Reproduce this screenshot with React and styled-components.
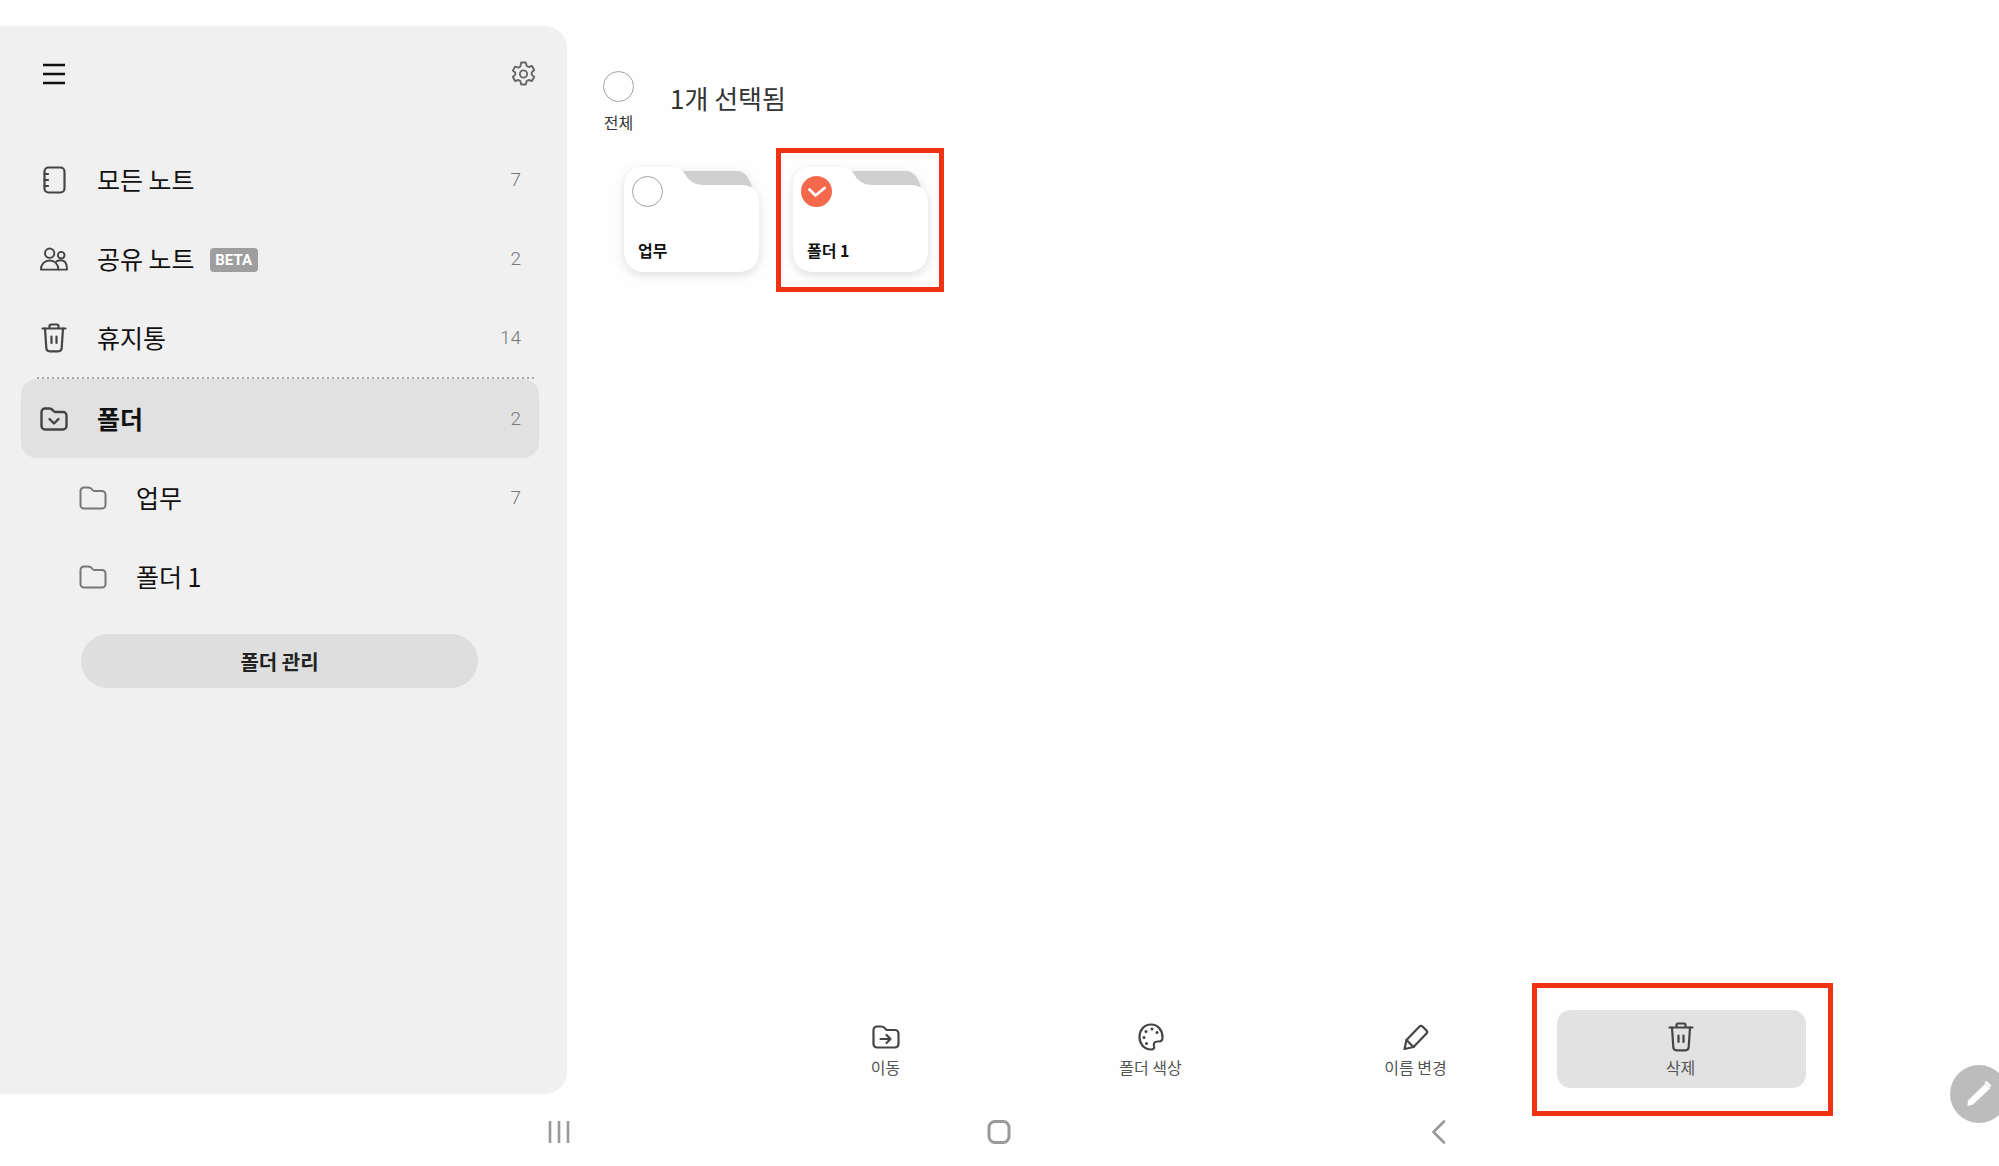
import styled, { createGlobalStyle } from "styled-components";

const GlobalStyle = createGlobalStyle`
  html, body {
    margin: 0;
    padding: 0;
    background: #fefefe;
  }
  * {
    box-sizing: border-box;
  }
`;

const Line = ({ w, h, sw = 2.2, color = "#444", children }) => (
  <svg width={w} height={h} viewBox={`0 0 ${w} ${h}`} fill="none" stroke={color} strokeWidth={sw} strokeLinecap="round" strokeLinejoin="round">
    {children}
  </svg>
);

const MenuIcon = () => (
  <Line w={24} h={22} sw={2.6} color="#111">
    <path d="M1 2h22M1 11h22M1 20h22" strokeLinecap="butt" />
  </Line>
);

const GearIcon = () => (
  <Line w={25} h={26} sw={1.9} color="#666">
    <path d="M10.2 1.5h4.6l.8 3.4 2 1.1 3.3-1 2.3 4-2.5 2.4v2.2l2.5 2.4-2.3 4-3.3-1-2 1.1-.8 3.4h-4.6l-.8-3.4-2-1.1-3.3 1-2.3-4 2.5-2.4v-2.2L1.8 9.6l2.3-4 3.3 1 2-1.1z" />
    <circle cx="12.5" cy="13" r="3.6" />
  </Line>
);

const NoteIcon = () => (
  <Line w={24} h={28}>
    <rect x="2.5" y="1.5" width="20" height="25" rx="4" />
    <path d="M2.5 8h3.5M2.5 14h3.5M2.5 20h3.5" />
  </Line>
);

const UsersIcon = () => (
  <Line w={29} h={24} sw={2}>
    <circle cx="10" cy="6" r="4.8" />
    <circle cx="22" cy="8" r="3.4" />
    <path d="M1 23c0-6 4-9.5 9-9.5s9 3.5 9 9.5z" />
    <path d="M17 14.5c1.300-.7 3-1.200 4.500-1.200 4 0 6.500 3.700 6.500 9.700h-9" />
  </Line>
);

const TrashIcon = () => (
  <Line w={26} h={30}>
    <path d="M8.500 5.500V3a1.500 1.500 0 0 1 1.500-1.500h6A1.500 1.500 0 0 1 17.500 3v2.500M1.500 5.500h23" />
    <path d="M4 5.500 5.300 25a3.500 3.500 0 0 0 3.500 3.300h8.400a3.500 3.500 0 0 0 3.500-3.300L22 5.500" />
    <path d="M10.500 13.500v6.500M15.500 13.500v6.500" />
  </Line>
);

const folderPath =
  "M1.500 5a3.500 3.500 0 0 1 3.500-3.500h4.500c2 0 3 1 4 2.500.6.800 1.100 1 2 1h7.500a3.500 3.500 0 0 1 3.500 3.500v10.500a3.500 3.500 0 0 1-3.500 3.500H5a3.500 3.500 0 0 1-3.500-3.500z";

const FolderIcon = ({ color = "#777", sw = 2, children }) => (
  <Line w={28} h={24} sw={sw} color={color}>
    <path d={folderPath} />
    {children}
  </Line>
);

const PaletteIcon = () => (
  <svg width="26" height="28" viewBox="0 0 26 28" fill="none" stroke="#444" strokeWidth="2.2" strokeLinejoin="round">
    <path d="M13 1.500C6 1.500 1.500 7.300 1.500 14S6 26.500 13 26.500c2.700 0 3.700-1.500 3-3.500-.8-2.500.5-4.500 3.500-4.500h1.500c2.300 0 3.500-1.500 3.500-4C24.500 7.300 20 1.500 13 1.500z" />
    <g fill="#444" stroke="none">
      <circle cx="8" cy="8.500" r="1.500" />
      <circle cx="14" cy="6" r="1.500" />
      <circle cx="19" cy="9.500" r="1.500" />
      <circle cx="6" cy="14.500" r="1.500" />
      <circle cx="8.500" cy="20.500" r="1.500" />
    </g>
  </svg>
);

const PencilIcon = () => (
  <Line w={27} h={27}>
    <path d="M2.500 25 4.500 16 17.500 2.500c1-1 2-1 3 0l4 4c1 1 1 2 0 3L11.500 23z" />
    <path d="M4.500 16l7 7" />
  </Line>
);

const Page = styled.div`
  position: relative;
  width: 1999px;
  height: 1166px;
  overflow: hidden;
  display: flex;
  flex-direction: column;
  background: #fefefe;
  font-family: "Noto Sans CJK KR", "Noto Sans", sans-serif;
  color: #111;
`;

const Content = styled.div`
  display: flex;
  height: 1094px;
`;

const Sidebar = styled.aside`
  width: 567px;
  margin-top: 26px;
  background: #f0f0f0;
  border-radius: 0 22px 22px 0;
  flex-shrink: 0;
`;

const SideHeader = styled.div`
  height: 96px;
  margin-bottom: 18px;
  padding: 0 31px 0 42px;
  display: flex;
  align-items: center;
  justify-content: space-between;
`;

const Row = styled.div`
  height: 79px;
  margin: 0 28px 0 21px;
  padding: 0 18px 0 ${(p) => (p.$sub ? 58 : 19)}px;
  display: flex;
  align-items: center;
  background: ${(p) => (p.$active ? "#e1e1e1" : "transparent")};
  border-radius: 16px;
`;

const RowIcon = styled.span`
  width: 28px;
  display: flex;
  justify-content: center;
  flex-shrink: 0;
`;

const RowLabel = styled.span`
  margin-left: 29px;
  font-size: 25px;
  line-height: 1;
  font-weight: ${(p) => (p.$active ? 700 : 400)};
  color: #111;
`;

const Beta = styled.span`
  margin: 3px 0 0 15px;
  width: 48px;
  height: 24px;
  border-radius: 4px;
  background: #9e9e9e;
  color: #fff;
  font-family: "Roboto", sans-serif;
  font-size: 15px;
  font-weight: 700;
  display: flex;
  align-items: center;
  justify-content: center;
`;

const Count = styled.span`
  margin-left: auto;
  font-family: "Roboto", sans-serif;
  font-size: 19px;
  font-weight: 300;
  color: #777;
`;

const Divider = styled.div`
  height: 2px;
  margin: 0 31px 0 37px;
  background-image: linear-gradient(to right, #a8a8a8 2px, transparent 2px);
  background-size: 5px 2px;
`;

const ManageButton = styled.div`
  height: 54px;
  margin: 18px 89px 0 81px;
  border-radius: 27px;
  background: #dedede;
  display: flex;
  align-items: center;
  justify-content: center;
  font-size: 20px;
  font-weight: 700;
  color: #222;
`;

const Main = styled.main`
  flex: 1;
  padding: 71px 0 6px 36px;
  display: flex;
  flex-direction: column;
`;

const SelectBar = styled.div`
  display: flex;
  align-items: flex-start;
`;

const SelectAll = styled.div`
  width: 31px;
  display: flex;
  flex-direction: column;
  align-items: center;
`;

const SelectAllLabel = styled.span`
  margin-top: 8px;
  font-size: 16px;
  line-height: 24px;
  white-space: nowrap;
  color: #333;
`;

const Circle = styled.span`
  width: 31px;
  height: 31px;
  border-radius: 50%;
  flex-shrink: 0;
  display: flex;
  align-items: center;
  justify-content: center;
  border: ${(p) => (p.$checked ? "none" : "1.5px solid #a2a2a2")};
  background: ${(p) => (p.$checked ? "#f4694c" : "transparent")};
`;

const Title = styled.h1`
  margin: 8px 0 0 36px;
  font-size: 26px;
  line-height: 38px;
  font-weight: 400;
  color: #333;
`;

const FolderGrid = styled.div`
  display: flex;
  gap: 34px;
  margin: 33px 0 0 21px;
`;

const Highlight = styled.span`
  position: absolute;
  top: ${(p) => p.$t}px;
  right: ${(p) => p.$r}px;
  bottom: ${(p) => p.$b}px;
  left: ${(p) => p.$l}px;
  border: 5px solid #ef3312;
  pointer-events: none;
`;

const FolderCard = styled.div`
  position: relative;
  width: 135px;
  height: 105px;
  padding: 9px 0 0 8px;
  display: flex;
  flex-direction: column;

  > svg {
    position: absolute;
    inset: 0;
    filter: drop-shadow(0 3px 5px rgba(0, 0, 0, 0.13));
  }
`;

const FolderSelect = styled.div`
  position: relative;
`;

const FolderName = styled.span`
  position: relative;
  margin: 31px 0 0 6px;
  font-size: 16px;
  line-height: 24px;
  font-weight: 700;
  color: #111;
`;

const Toolbar = styled.div`
  margin-top: auto;
  padding-right: 193px;
  display: flex;
  justify-content: flex-end;
  gap: 16px;
`;

const ToolItem = styled.div`
  position: relative;
  width: 249px;
  height: 78px;
  padding: 12px 2px 0 0;
  border-radius: 14px;
  background: ${(p) => (p.$active ? "#e2e2e2" : "transparent")};
  display: flex;
  flex-direction: column;
  align-items: center;
`;

const ToolIcon = styled.span`
  height: 30px;
  display: flex;
  align-items: center;
  justify-content: center;
`;

const ToolLabel = styled.span`
  margin-top: 3px;
  font-size: 16px;
  line-height: 24px;
  color: #555;
`;

const NavBar = styled.nav`
  height: 72px;
  display: flex;
  justify-content: center;
  align-items: flex-start;
  padding: 26px 2px 0 0;
`;

const NavSlot = styled.div`
  width: 440px;
  height: 24px;
  display: flex;
  align-items: center;
  justify-content: center;
`;

const Fab = styled.div`
  position: absolute;
  left: 1950px;
  top: 1065px;
  width: 58px;
  height: 58px;
  border-radius: 50%;
  background: #bcbcbc;
  display: flex;
  align-items: center;
  justify-content: center;
`;

const sideRows = [
  { label: "모든 노트", count: 7, icon: <NoteIcon /> },
  { label: "공유 노트", count: 2, icon: <UsersIcon />, beta: true },
  { label: "휴지통", count: 14, icon: <TrashIcon /> },
];

const tools = [
  {
    label: "이동",
    icon: (
      <FolderIcon color="#444" sw={2.2}>
        <path d="M8.500 14h10M14.500 10l4 4-4 4" />
      </FolderIcon>
    ),
  },
  { label: "폴더 색상", icon: <PaletteIcon /> },
  { label: "이름 변경", icon: <PencilIcon /> },
  { label: "삭제", icon: <TrashIcon />, active: true },
];

const Folder = ({ name, checked }) => (
  <FolderCard>
    <svg width="135" height="105" viewBox="0 0 135 105">
      <path d="M59 4H113Q123 4 128 20H72Q66 20 59 4Z" fill="#cfcfcf" />
      <path
        d="M20 0H50Q56 0 60 6 67 18 78 18H117Q135 18 135 36V83Q135 105 113 105H22Q0 105 0 83V20Q0 0 20 0Z"
        fill="#fff"
      />
    </svg>
    <FolderSelect>
      <Circle $checked={checked}>
        {checked && (
          <svg width="18" height="12" viewBox="0 0 18 12" fill="none" stroke="#fff" strokeWidth="2.800" strokeLinecap="round" strokeLinejoin="round">
            <path d="M1.500 3.500 7.500 9.500 16.500 2" />
          </svg>
        )}
      </Circle>
    </FolderSelect>
    <FolderName>{name}</FolderName>
    {checked && <Highlight $t={-19} $r={-16} $b={-20} $l={-17} />}
  </FolderCard>
);

const App = () => {
  return (
    <Page>
      <GlobalStyle />
      <Content>
        <Sidebar>
          <SideHeader>
            <MenuIcon />
            <GearIcon />
          </SideHeader>
          {sideRows.map((r) => (
            <Row key={r.label}>
              <RowIcon>{r.icon}</RowIcon>
              <RowLabel>{r.label}</RowLabel>
              {r.beta && <Beta>BETA</Beta>}
              <Count>{r.count}</Count>
            </Row>
          ))}
          <Divider />
          <Row $active>
            <RowIcon>
              <FolderIcon color="#444" sw={2.4}>
                <path d="M9.500 12l4.500 4.500 4.500-4.500" />
              </FolderIcon>
            </RowIcon>
            <RowLabel $active>폴더</RowLabel>
            <Count>2</Count>
          </Row>
          <Row $sub>
            <RowIcon>
              <FolderIcon />
            </RowIcon>
            <RowLabel>업무</RowLabel>
            <Count>7</Count>
          </Row>
          <Row $sub>
            <RowIcon>
              <FolderIcon />
            </RowIcon>
            <RowLabel>폴더 1</RowLabel>
          </Row>
          <ManageButton>폴더 관리</ManageButton>
        </Sidebar>

        <Main>
          <SelectBar>
            <SelectAll>
              <Circle />
              <SelectAllLabel>전체</SelectAllLabel>
            </SelectAll>
            <Title>1개 선택됨</Title>
          </SelectBar>

          <FolderGrid>
            <Folder name="업무" />
            <Folder name="폴더 1" checked />
          </FolderGrid>

          <Toolbar>
            {tools.map((t) => (
              <ToolItem key={t.label} $active={t.active}>
                <ToolIcon>{t.icon}</ToolIcon>
                <ToolLabel>{t.label}</ToolLabel>
                {t.active && <Highlight $t={-27} $r={-27} $b={-28} $l={-25} />}
              </ToolItem>
            ))}
          </Toolbar>
        </Main>
      </Content>

      <NavBar>
        <NavSlot>
          <Line w={22} h={24} sw={2.6} color="#999">
            <path d="M2 1v22M11 1v22M20 1v22" strokeLinecap="butt" />
          </Line>
        </NavSlot>
        <NavSlot>
          <Line w={24} h={24} sw={3} color="#999">
            <rect x="2" y="1.500" width="20" height="21" rx="6" />
          </Line>
        </NavSlot>
        <NavSlot>
          <Line w={15} h={24} sw={2.6} color="#999">
            <path d="M13 1.500 2.500 12 13 22.500" />
          </Line>
        </NavSlot>
      </NavBar>

      <Fab>
        <svg width="28" height="26" viewBox="0 0 28 26" fill="#fff">
          <path d="M3 19.500 20.500 2.500 25.500 7 8 23.500 2.500 25z" />
          <path d="M19 1.500 21.500 0 26.500 4.500 25.500 6z" />
        </svg>
      </Fab>
    </Page>
  );
};

export default App;
